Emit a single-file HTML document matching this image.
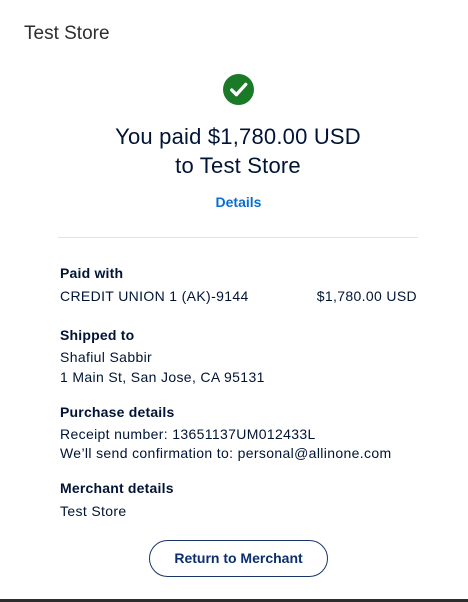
<!DOCTYPE html>
<html><head><style>
body{margin:0;width:468px;height:602px;background:#fff;font-family:"Liberation Sans",sans-serif;color:#001435;position:relative;overflow:hidden}
.a{position:absolute;white-space:nowrap}
.h{left:24px;top:23px;font-size:19px;color:#2c2e2f}
.t{left:0;width:476px;text-align:center;font-size:22px;letter-spacing:0.2px}
.l{left:60px;font-size:14px;font-weight:bold;letter-spacing:0.2px}
.v{left:60px;font-size:14px;letter-spacing:0.35px}
</style></head><body>
<div class="a h">Test Store</div>
<svg class="a" style="left:223px;top:74px" width="31" height="31" viewBox="0 0 30 30"><circle cx="15" cy="15" r="15" fill="#1a7a27"/><path d="M8.5 15.5l4.5 4.5 9-10" stroke="#fff" stroke-width="3.2" fill="none" stroke-linecap="round" stroke-linejoin="round"/></svg>
<div class="a t" style="top:124px">You paid $1,780.00 USD</div>
<div class="a t" style="top:153px">to Test Store</div>
<div class="a" style="left:0;width:477px;text-align:center;top:194px;font-size:14px;font-weight:bold;color:#0a6ed1">Details</div>
<div class="a" style="left:58px;width:360px;top:237px;height:1px;background:#e2e2e2"></div>
<div class="a l" style="top:265px">Paid with</div>
<div class="a v" style="top:288px">CREDIT UNION 1 (AK)-9144</div>
<div class="a v" style="top:288px;left:auto;right:51px">$1,780.00 USD</div>
<div class="a l" style="top:327px">Shipped to</div>
<div class="a v" style="top:349px">Shafiul Sabbir</div>
<div class="a v" style="top:369px">1 Main St, San Jose, CA 95131</div>
<div class="a l" style="top:404px">Purchase details</div>
<div class="a v" style="top:426px">Receipt number: 13651137UM012433L</div>
<div class="a v" style="top:445px">We’ll send confirmation to: personal@allinone.com</div>
<div class="a l" style="top:480px">Merchant details</div>
<div class="a v" style="top:503px">Test Store</div>
<div class="a" style="left:149px;top:540px;width:177px;height:35px;border:1px solid #1a3668;border-radius:19px;text-align:center;line-height:35px;font-size:14px;font-weight:bold;color:#0b2f6e">Return to Merchant</div>
<div class="a" style="left:0;top:599px;width:468px;height:3px;background:#2d2d2d"></div>
</body></html>
